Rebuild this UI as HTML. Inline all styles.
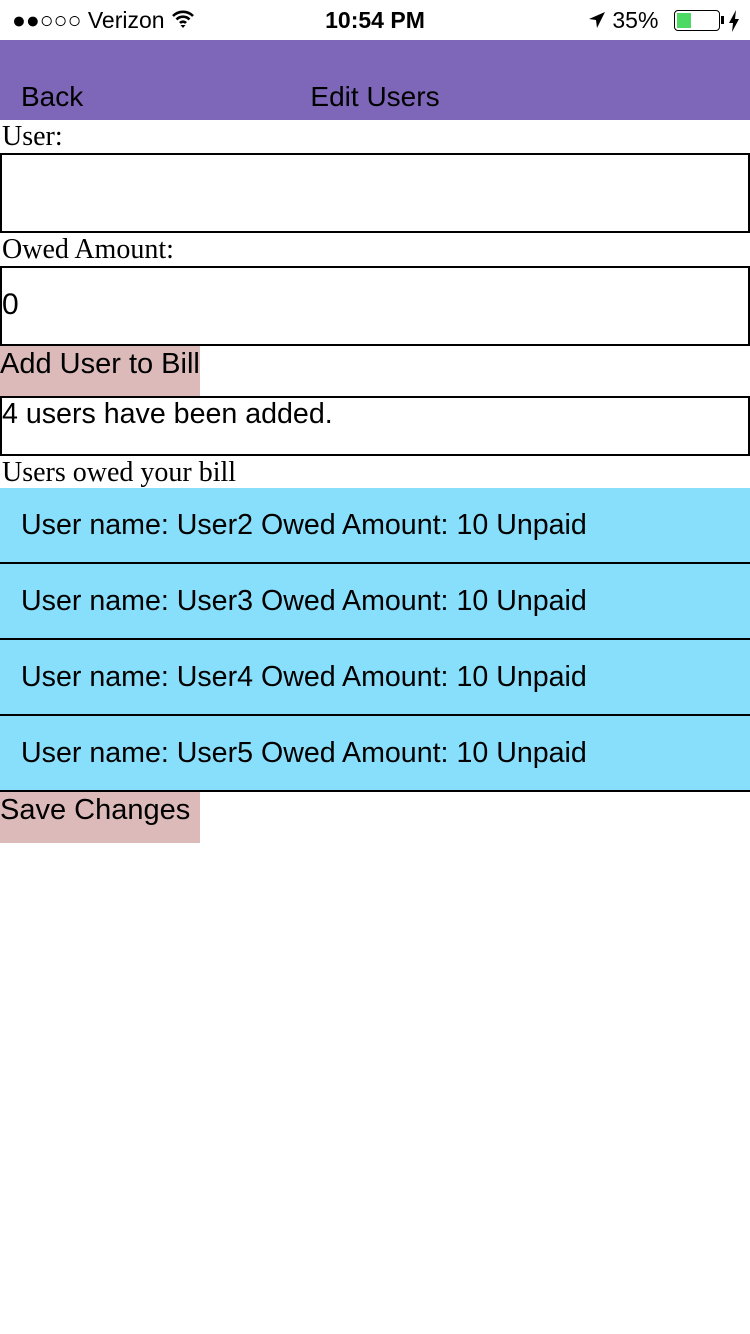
<!DOCTYPE html>
<html><head><meta charset="utf-8"><style>
*{margin:0;padding:0;box-sizing:border-box}
body{width:750px;height:1334px;background:#fff;font-family:"Liberation Sans",sans-serif;color:#000;position:relative;overflow:hidden}
.a{position:absolute}
.serif{font-family:"Liberation Serif",serif;font-size:28px;line-height:30px}
.box{left:0;width:750px;border:2px solid #000}
.btn{left:0;width:200px;background:#dbbab9;font-size:29px;line-height:36px;white-space:nowrap}
.row{left:0;width:750px;height:76px;background:#88dffb;border-bottom:2px solid #000;font-size:28.6px;line-height:74px;padding-left:21px}
</style></head><body>
<div class="a" style="left:12px;top:6px;font-size:23px;line-height:28px">●●○○○ Verizon
<svg width="24" height="20" viewBox="0 0 24 20" style="vertical-align:-1px"><path d="M2 7a14 14 0 0 1 20 0M5.5 10.5a9 9 0 0 1 13 0M9 14a4 4 0 0 1 6 0" stroke="#000" stroke-width="2.6" fill="none"/><path d="M12 19l-2.5-3h5z"/></svg></div>
<div class="a" style="left:0;width:750px;top:6px;text-align:center;font-size:23px;font-weight:bold;line-height:28px">10:54 PM</div>
<div class="a" style="left:588px;top:6px;font-size:23px;line-height:28px"><svg width="18" height="18" viewBox="0 0 18 18" style="vertical-align:-1px"><path d="M17 1L1 8l7 1 1 8z"/></svg> 35%</div>
<div class="a" style="left:674px;top:10px;width:46px;height:21px;border:1.5px solid #000;border-radius:4px;padding:2px"><div style="width:14px;height:100%;background:#4cd964"></div></div>
<div class="a" style="left:721px;top:16px;width:3px;height:8px;background:#000"></div>
<svg class="a" style="left:728px;top:10px" width="12" height="22" viewBox="0 0 12 22"><path d="M8 0L1 13h4l-1 9 7-13H7z"/></svg>
<div class="a" style="left:0;top:40px;width:750px;height:80px;background:#7e67b9"></div>
<div class="a" style="left:21px;top:81px;font-size:28px">Back</div>
<div class="a" style="left:0;width:750px;top:81px;text-align:center;font-size:28px">Edit Users</div>
<div class="a serif" style="left:2px;top:122px">User:</div>
<div class="a box" style="top:153px;height:80px"></div>
<div class="a serif" style="left:2px;top:235px">Owed Amount:</div>
<div class="a box" style="top:266px;height:80px;font-size:30px;line-height:74px">0</div>
<div class="a btn" style="top:346px;height:50px">Add User to Bill</div>
<div class="a box" style="top:396px;height:60px;font-size:28.6px;line-height:32px">4 users have been added.</div>
<div class="a serif" style="left:2px;top:458px">Users owed your bill</div>
<div class="a row" style="top:488px">User name: User2 Owed Amount: 10 Unpaid</div>
<div class="a row" style="top:564px">User name: User3 Owed Amount: 10 Unpaid</div>
<div class="a row" style="top:640px">User name: User4 Owed Amount: 10 Unpaid</div>
<div class="a row" style="top:716px">User name: User5 Owed Amount: 10 Unpaid</div>
<div class="a btn" style="top:792px;height:51px">Save Changes</div>
</body></html>
